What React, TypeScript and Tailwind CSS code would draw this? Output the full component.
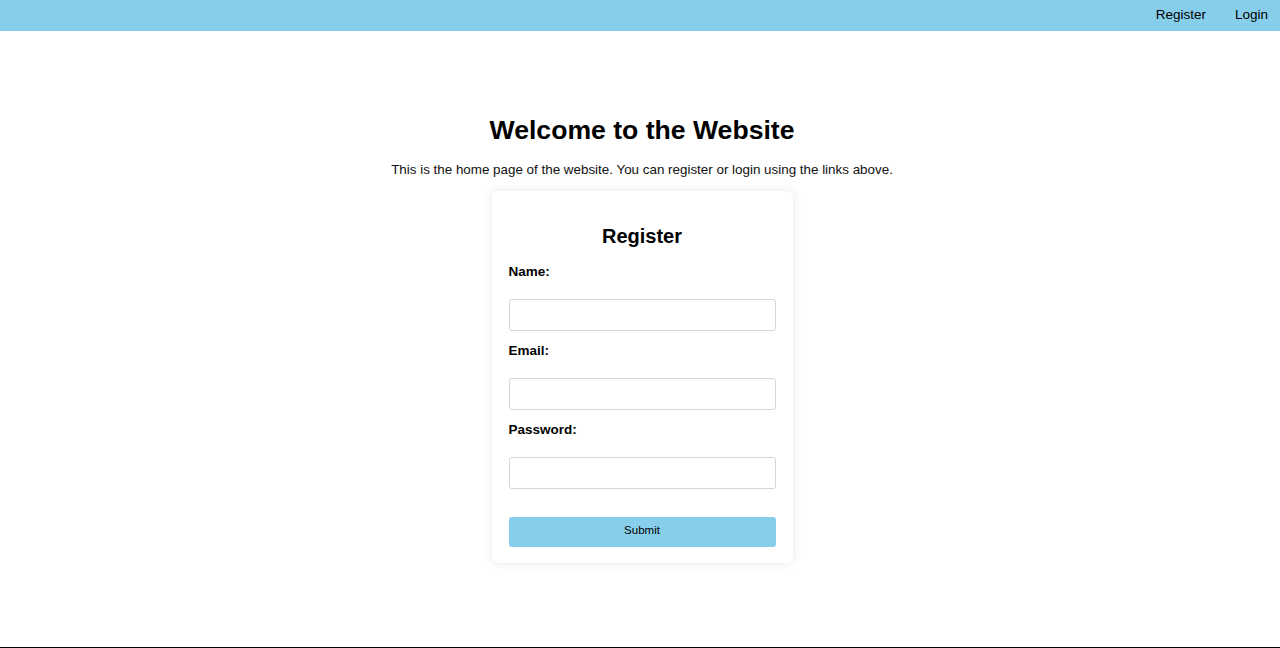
export default function App() {
  return (
    <div className="h-[648px] flex flex-col bg-white text-black" style={{ fontFamily: '"Liberation Sans", Arial, sans-serif' }}>
      {/* nav */}
      <nav className="h-[31px] bg-[#87ceeb] flex items-center justify-end gap-[29px] pr-[12px] text-[13.5px]">
        <a href="#" className="text-black">Register</a>
        <a href="#" className="text-black">Login</a>
      </nav>

      <main className="flex-1 flex flex-col items-center pt-[81px] pl-[4px]">
        <h1 className="text-[26.6px] leading-[36px] font-bold">Welcome to the Website</h1>
        <p className="mt-[14px] text-[13.4px] leading-[16px] text-[#111]">
          This is the home page of the website. You can register or login using the links above.
        </p>

        <form className="mt-[13px] w-[301px] rounded-[6px] bg-white shadow-[0_0_10px_rgba(0,0,0,0.1)] px-[17px] pt-[34px] pb-[16px]">
          <h2 className="text-center text-[20px] leading-[23px] font-bold">Register</h2>
          <div className="mt-[16px]">
            <Field label="Name:" />
          </div>
          <div className="mt-[12px]">
            <Field label="Email:" />
          </div>
          <div className="mt-[12px]">
            <Field label="Password:" type="password" />
          </div>
          <button
            type="button"
            className="mt-[28px] w-full h-[30px] pb-[2px] rounded-[3px] bg-[#87ceeb] text-[11.5px] text-black"
          >
            Submit
          </button>
        </form>
      </main>

      <div className="h-px bg-black" />
    </div>
  )
}

function Field({ label, type = 'text' }: { label: string; type?: string }) {
  return (
    <div>
      <label className="block text-[13.5px] leading-[16px] font-bold">{label}</label>
      <input
        type={type}
        className="mt-[19px] block w-full h-[32px] rounded-[3px] border border-[#d6d6d6] bg-white px-2 outline-none"
      />
    </div>
  )
}
